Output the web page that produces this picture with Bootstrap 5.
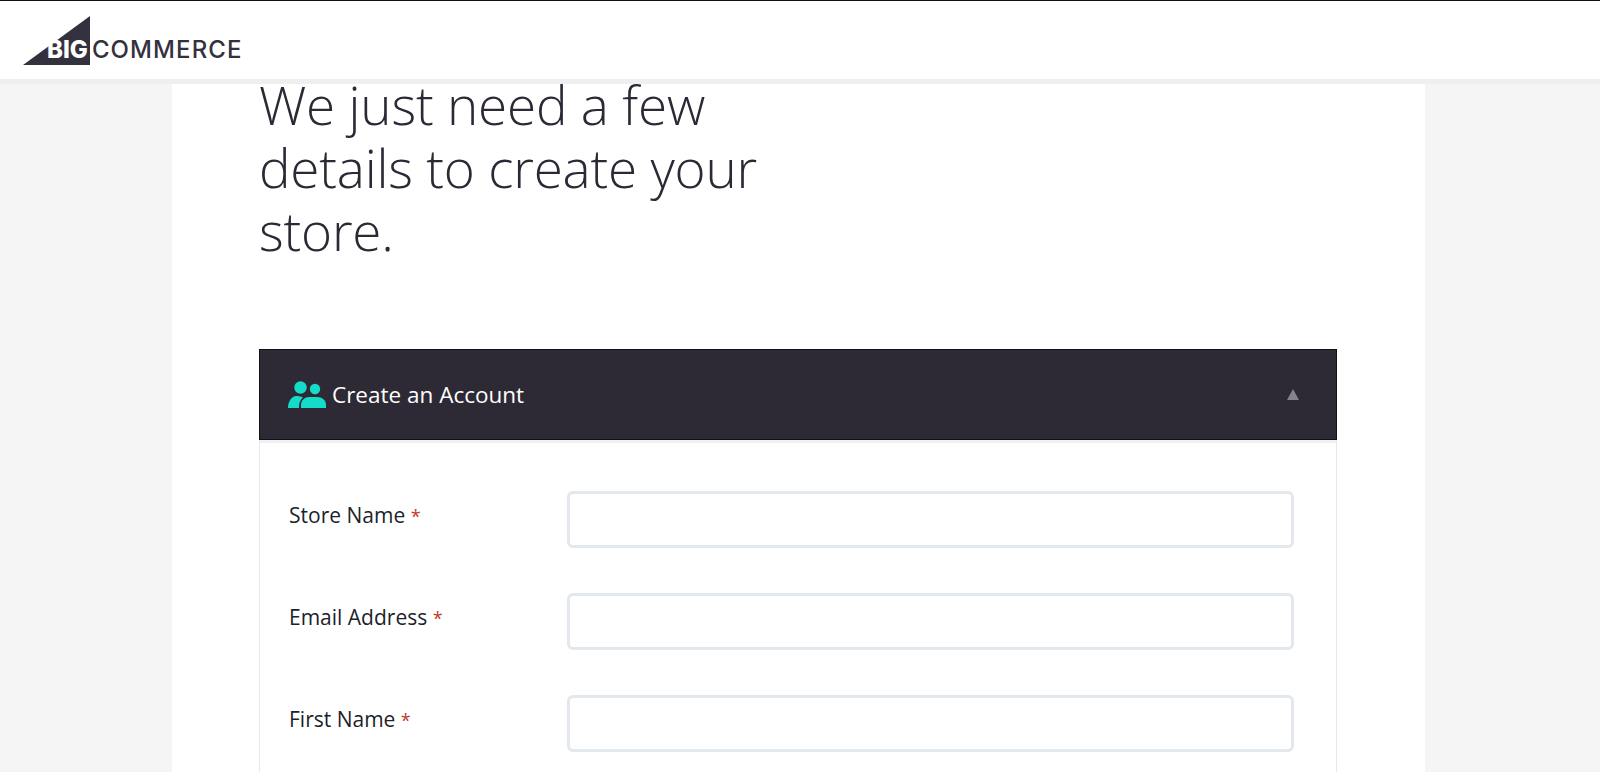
<!DOCTYPE html>
<html lang="en">

<head>
    <meta charset="UTF-8">
    <meta name="viewport" content="width=device-width, initial-scale=1.0">
    <title>BigCommerce - Create your store</title>
    <link href="https://cdn.jsdelivr.net/npm/bootstrap@5.3.0/dist/css/bootstrap.min.css" rel="stylesheet">
    <style>
        html, body {
            height: 772px;
            overflow: hidden;
        }
        body {
            background: #f5f5f5;
            font-family: "Open Sans", "Noto Sans", sans-serif;
            color: #2b2935;
        }
        .top-bar {
            background: #fff;
            height: 84px;
            border-top: 1px solid #111;
            border-bottom: 5px solid #efefef;
            padding-left: 23px;
        }
        .brand-logo {
            position: relative;
            width: 230px;
            height: 50px;
            margin-top: 14px;
        }
        .brand-logo svg {
            position: absolute;
            left: 0;
            top: 0;
        }
        .brand-text {
            position: absolute;
            left: 24px;
            top: 21px;
            font-family: "Inter", "Liberation Sans", sans-serif;
            font-size: 24px;
            line-height: 28px;
            white-space: nowrap;
            color: #34313f;
            font-weight: 500;
            letter-spacing: 1.1px;
        }
        .brand-text b {
            color: #fff;
            font-weight: 800;
            letter-spacing: 0;
            margin-right: 4px;
        }
        .page-sheet {
            display: flow-root;
            width: 1253px;
            height: 688px;
            margin-left: 172px;
            background: #fff;
            padding: 0 88px 0 87px;
        }
        .intro-title {
            width: 540px;
            height: 265px;
            margin: -11px 0 11px;
            font-size: 53px;
            font-weight: 300;
            line-height: 63px;
            letter-spacing: -0.2px;
            color: #2b2935;
        }
        .account-panel {
            border: 0;
            border-radius: 0;
            background: transparent;
        }
        .account-head {
            height: 91px;
            background: #2d2a36;
            border: 1px solid #111;
            border-radius: 0 !important;
            padding: 0 37px 0 28px;
            color: #fff;
            font-size: 22.5px;
            font-weight: 500;
        }
        .account-title {
            margin-left: 2px;
        }
        .account-caret {
            width: 0;
            height: 0;
            border-left: 6px solid transparent;
            border-right: 6px solid transparent;
            border-bottom: 11px solid #85848a;
        }
        .account-body {
            border: 1px solid #e6e8ea;
            border-top: 3px solid #eef0f2;
            padding: 48px 42px 0 29px;
        }
        .field-row {
            height: 57px;
            margin-bottom: 45px;
        }
        .field-label {
            flex: 0 0 278px;
            margin: 0 0 7px;
            font-size: 21px;
            font-weight: 500;
            color: #211f2b;
        }
        .req-mark {
            color: #c0392b;
            font-size: 18px;
        }
        .field-input {
            height: 57px;
            border: 3px solid #e2e8ec;
            border-radius: 6px;
        }
    </style>
</head>

<body>
    <header class="top-bar">
        <div class="brand-logo">
            <svg width="68" height="50" viewBox="0 0 68 50"><polygon points="0,50 67,1 67,50" fill="#34313f"/></svg>
            <div class="brand-text"><b>BIG</b>COMMERCE</div>
        </div>
    </header>

    <main class="page-sheet">
        <h1 class="intro-title">We just need a few details to create your store.</h1>

        <section class="card account-panel">
            <div class="card-header account-head d-flex align-items-center justify-content-between">
                <div class="d-flex align-items-center">
                    <svg width="38" height="28" viewBox="0 0 38 28" fill="#14dcc8" class="me-1">
                        <circle cx="12.5" cy="6.5" r="6.2"/>
                        <circle cx="27" cy="8" r="5.2"/>
                        <path d="M0 27c0-7 4-12 8-12 3 0 5 .5 7 1.5-2.5 2-4 5-4 10.5z"/>
                        <path d="M13 27v-3c0-5 4-8 8-8h8c5 0 9 3 9 8v3z"/>
                    </svg>
                    <span class="account-title">Create an Account</span>
                </div>
                <span class="account-caret"></span>
            </div>
            <div class="card-body account-body">
                <form>
                    <div class="d-flex align-items-center field-row">
                        <label class="field-label" for="storeName">Store Name <span class="req-mark">*</span></label>
                        <input class="form-control field-input" id="storeName" type="text">
                    </div>
                    <div class="d-flex align-items-center field-row">
                        <label class="field-label" for="emailAddress">Email Address <span class="req-mark">*</span></label>
                        <input class="form-control field-input" id="emailAddress" type="email">
                    </div>
                    <div class="d-flex align-items-center field-row">
                        <label class="field-label" for="firstName">First Name <span class="req-mark">*</span></label>
                        <input class="form-control field-input" id="firstName" type="text">
                    </div>
                </form>
            </div>
        </section>
    </main>

    <script src="https://cdn.jsdelivr.net/npm/bootstrap@5.3.0/dist/js/bootstrap.bundle.min.js"></script>
</body>

</html>
